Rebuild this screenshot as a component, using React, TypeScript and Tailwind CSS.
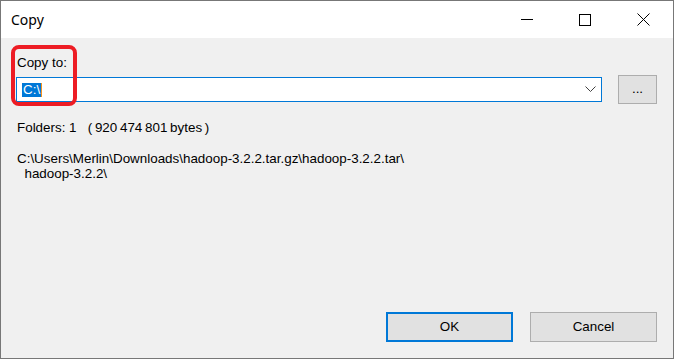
import React from 'react';

export default function App() {
  return (
    <div className="relative w-[674px] h-[359px] flex flex-col bg-[#f0f0f0] border border-[#777777] text-black font-['Liberation_Sans',Arial,sans-serif] text-[13.4px]">
      {/* title bar */}
      <div className="h-[37px] bg-white flex items-center shrink-0">
        <span className="pl-[10px] text-[14px] font-['Noto_Sans',sans-serif] text-[#000]">Copy</span>
        <div className="ml-auto flex items-center h-full">
          <div className="w-[46px] h-full flex items-center justify-center mr-[12px]">
            <div className="w-[12px] h-px bg-black" />
          </div>
          <div className="w-[46px] h-full flex items-center justify-center mr-[12px]">
            <div className="w-[12px] h-[12px] border border-black" />
          </div>
          <div className="w-[46px] h-full flex items-center justify-center mr-[7px]">
            <svg width="13" height="13" viewBox="0 0 13 13">
              <path d="M0.5 0.5 L12.5 12.5 M12.5 0.5 L0.5 12.5" stroke="#000" strokeWidth="1" />
            </svg>
          </div>
        </div>
      </div>

      {/* body */}
      <div className="flex-1 flex flex-col pl-[15px] pr-[16px]">
        <div className="pt-[17px] pl-[1px] leading-[15px]">Copy to:</div>
        <div className="flex items-center mt-[5px]">
          <div className="w-[586px] h-[25px] border border-[#0078d7] bg-white flex items-center pl-[5px]">
            <span className="bg-[#0078d7] text-white leading-[14px] px-[1px] border-r border-[#f7941d]">C:\</span>
            <svg className="ml-auto mr-[5px]" width="11" height="7" viewBox="0 0 11 7">
              <path d="M0.5 0.5 L5.5 5.5 L10.5 0.5" fill="none" stroke="#404040" strokeWidth="1" />
            </svg>
          </div>
          <button className="ml-[16px] w-[39px] h-[29px] border border-[#adadad] bg-[#e1e1e1] flex items-end justify-center pb-[8px] leading-none">
            ...
          </button>
        </div>
        <div className="mt-[16px] pl-[1px] leading-[15px] whitespace-pre">
          Folders: 1   <span className="[word-spacing:-1px]">( 920 474 801 bytes )</span>
        </div>
        <div className="mt-[16px] pl-[1px] leading-[15px] whitespace-pre">
          <div>C:\Users\Merlin\Downloads\hadoop-3.2.2.tar.gz\hadoop-3.2.2.tar\</div>
          <div>  hadoop-3.2.2\</div>
        </div>

        <div className="mt-auto mb-[16px] flex justify-end gap-[17px]">
          <button className="w-[127px] h-[30px] border-2 border-[#0078d7] bg-[#e1e1e1] flex items-center justify-center">
            OK
          </button>
          <button className="w-[127px] h-[30px] border border-[#adadad] bg-[#e1e1e1] flex items-center justify-center">
            Cancel
          </button>
        </div>
      </div>

      {/* red annotation around "Copy to:" */}
      <div className="absolute left-[10px] top-[44px] w-[66px] h-[61px] border-4 border-[#ed1c24] rounded-[8px] pointer-events-none" />
    </div>
  );
}
